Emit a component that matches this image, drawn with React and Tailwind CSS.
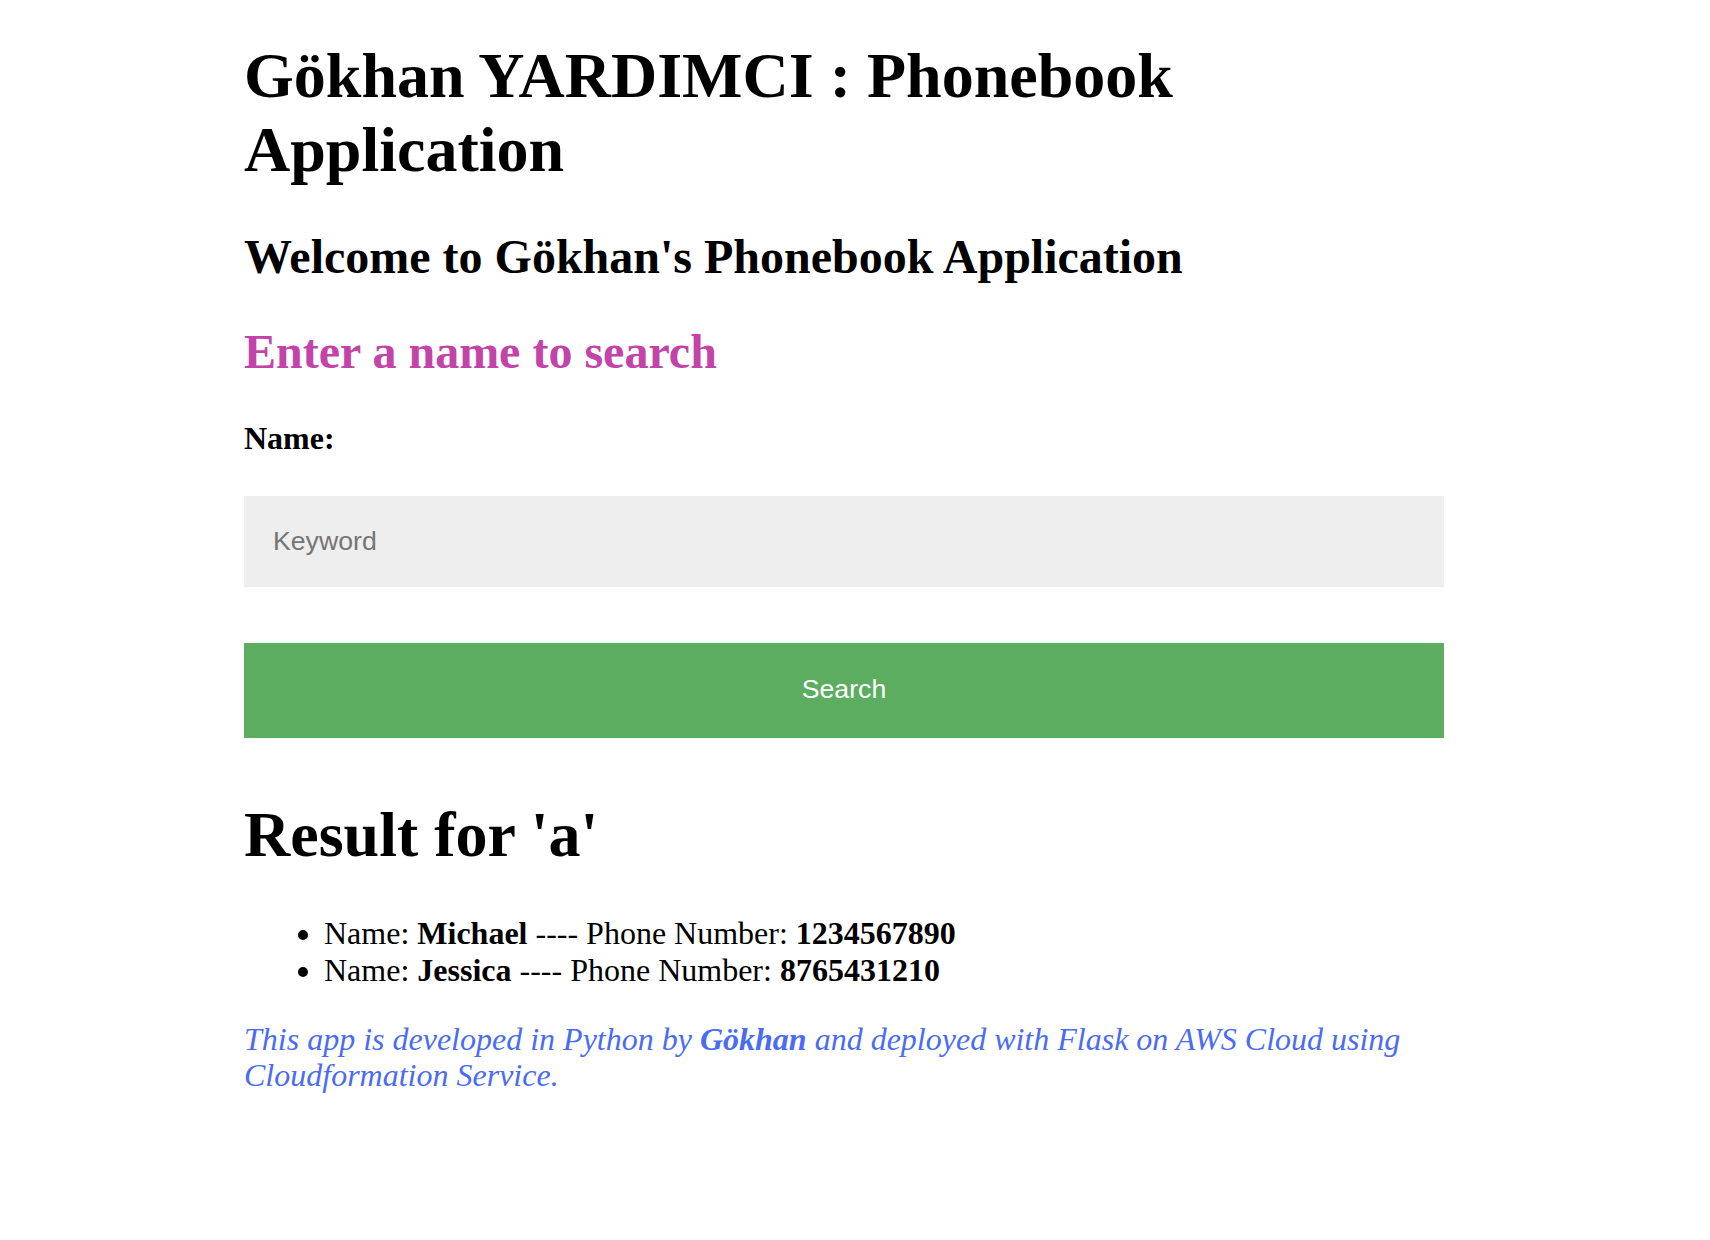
export default function App() {
  const serif = { fontFamily: '"Liberation Serif", "Times New Roman", serif' };
  return (
    <div className="bg-white min-h-[1240px] text-black" style={serif}>
      <div className="ml-[244px] w-[1200px] pt-[39px] font-['Liberation_Serif',serif]">
        <h1 className="text-[64px] font-bold leading-[1.15] m-0">
          Gökhan YARDIMCI : Phonebook Application
        </h1>
        <h2 className="text-[48px] font-bold leading-[1.15] mt-[43px]">
          Welcome to Gökhan's Phonebook Application
        </h2>
        <h2 className="text-[48px] font-bold leading-[1.15] mt-[40px] text-[#c244a8]">
          Enter a name to search
        </h2>
        <div className="text-[32px] font-bold leading-[1.15] mt-[40px]">Name:</div>
        <input
          type="text"
          placeholder="Keyword"
          className="block w-[1200px] h-[91px] mt-[40px] bg-[#eeeeee] px-[29px] text-[26.67px] text-black placeholder:text-[#757575] outline-none border-0"
          style={{ fontFamily: '"Liberation Sans", Arial, sans-serif' }}
        />
        <button
          className="block w-[1200px] h-[95px] mt-[56px] bg-[#5cad5f] text-white text-[26.67px] pb-[3px]"
          style={{ fontFamily: '"Liberation Sans", Arial, sans-serif' }}
        >
          Search
        </button>
        <h1 className="text-[64px] font-bold leading-[1.15] mt-[60px]">Result for 'a'</h1>
        <ul className="list-disc pl-[80px] mt-[43px] text-[32px] leading-[1.15]">
          <li>
            Name: <b>Michael</b> ---- Phone Number: <b>1234567890</b>
          </li>
          <li>
            Name: <b>Jessica</b> ---- Phone Number: <b>8765431210</b>
          </li>
        </ul>
        <p className="mt-[32px] text-[32px] italic leading-[1.15] text-[#4a6cf4]">
          This app is developed in Python by <b>Gökhan</b> and deployed with Flask on AWS Cloud using Cloudformation Service.
        </p>
      </div>
    </div>
  );
}
